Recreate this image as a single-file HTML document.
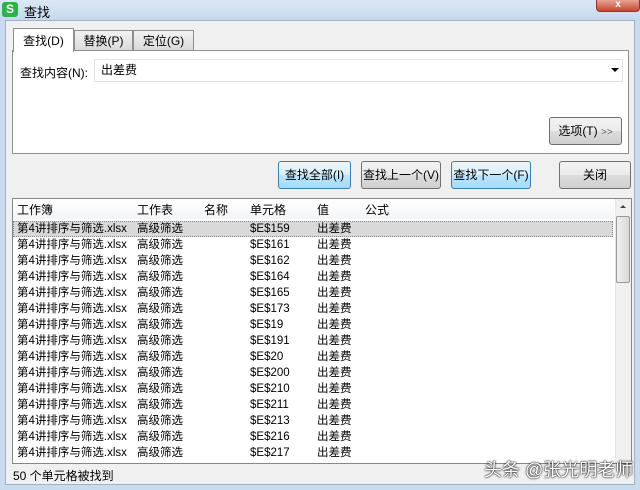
<!DOCTYPE html>
<html><head><meta charset="utf-8"><style>
*{margin:0;padding:0;box-sizing:border-box}
body{width:640px;height:490px;overflow:hidden;background:#c9dcef;font-family:"Liberation Sans","Noto Sans CJK SC",sans-serif;font-size:12px;color:#000;position:relative}
.a{position:absolute}
.title{left:0;top:0;width:640px;height:20px;background:linear-gradient(#dbe8f5,#c5d9ee)}
.frame{left:5px;top:20px;width:630px;height:465px;background:#f0f0f0;border:1px solid #9fb2c7}
.btn{position:absolute;border:1px solid #707070;border-radius:3px;background:linear-gradient(#f2f2f2,#ebebeb 50%,#dddddd 50%,#cfcfcf);text-align:center;line-height:26px;font-size:12px}
.btn.b{border-color:#3c7fb1;background:linear-gradient(#eaf6fd,#d9f0fc 50%,#bee6fd 50%,#a7d9f5)}
.row{position:absolute;left:13px;height:16px;line-height:17px;width:600px;font-size:11.5px}
.row span{position:absolute;top:0}
</style></head><body>
<div class="a title"></div>
<div class="a" style="left:2px;top:2px;width:16px;height:15px;background:#2fb04a;border-radius:3px;color:#fff;font-weight:bold;font-size:12px;text-align:center;line-height:15px">S</div>
<div class="a" style="left:24px;top:2px;font-size:13px">查找</div>
<div class="a" style="left:596px;top:0;width:44px;height:12px;background:linear-gradient(#e8a494,#c8472f);border:1px solid #8a3a2a;border-top:none;border-radius:0 0 4px 4px;color:#fff;font-size:10px;text-align:center;line-height:10px;font-weight:bold">x</div>
<div class="a frame"></div>
<div class="a" style="left:12px;top:50px;width:617px;height:104px;background:#fff;border:1px solid #8e8f8f"></div>
<div class="a" style="left:74px;top:30px;width:59px;height:21px;border:1px solid #8e8f8f;background:linear-gradient(#f2f2f2,#dadada);text-align:center;line-height:20px">替换(P)</div>
<div class="a" style="left:133px;top:30px;width:61px;height:21px;border:1px solid #8e8f8f;background:linear-gradient(#f2f2f2,#dadada);text-align:center;line-height:20px">定位(G)</div>
<div class="a" style="left:13px;top:28px;width:61px;height:24px;border:1px solid #8e8f8f;border-bottom:none;background:#fff;text-align:center;line-height:24px">查找(D)</div>
<div class="a" style="left:20px;top:64px">查找内容(N):</div>
<div class="a" style="left:94px;top:59px;width:529px;height:23px;border:1px solid #e3e3e3;background:#fff;padding-left:6px;line-height:21px">出差费</div>
<div class="a" style="left:611px;top:68px;width:0;height:0;border-left:4px solid transparent;border-right:4px solid transparent;border-top:4px solid #000"></div>
<div class="btn" style="left:549px;top:117px;width:73px;height:28px">选项(T) <span style="color:#666;font-size:10px">&gt;&gt;</span></div>
<div class="btn b" style="left:278px;top:161px;width:73px;height:28px">查找全部(I)</div>
<div class="btn" style="left:361px;top:161px;width:80px;height:28px">查找上一个(V)</div>
<div class="btn b" style="left:451px;top:161px;width:80px;height:28px">查找下一个(F)</div>
<div class="btn" style="left:559px;top:161px;width:72px;height:28px">关闭</div>
<div class="a" style="left:12px;top:198px;width:620px;height:266px;background:#fff;border:1px solid #828790"></div>
<div class="a" style="left:13px;top:199px;width:601px;height:20px;background:linear-gradient(#fff,#f4f5f7)"></div>
<div class="row" style="top:201px;height:18px;line-height:18px;font-size:12px"><span style="left:4px">工作簿</span><span style="left:124px">工作表</span><span style="left:191px">名称</span><span style="left:237px">单元格</span><span style="left:304px">值</span><span style="left:352px">公式</span></div>
<div class="a" style="left:13px;top:221px;width:600px;height:16px;background:#d9d9d9;border:1px dotted #888"></div>
<div id="rows"></div>
<div class="a" style="left:615px;top:199px;width:16px;height:264px;background:#f0f0f0;border-left:1px solid #e6e6e6"></div>
<div class="a" style="left:620px;top:205px;width:0;height:0;border-left:3px solid transparent;border-right:3px solid transparent;border-bottom:3px solid #444"></div>
<div class="a" style="left:616px;top:216px;width:14px;height:67px;border:1px solid #9a9a9a;border-radius:2px;background:linear-gradient(90deg,#f0f0f0,#d8d8d8)"></div>
<div class="a" style="left:13px;top:467px">50 个单元格被找到</div>
<div class="a" style="left:484px;top:456px;font-size:18px;color:#fff;text-shadow:0 0 2px #000,0 0 1px #000">头条 @张光明老师</div>
<script>
var v=[159,161,162,164,165,173,19,191,20,200,210,211,213,216,217],h='';
v.forEach(function(n,i){h+='<div class="row" style="top:'+(221+i*16)+'px"><span style="left:4px">第4讲排序与筛选.xlsx</span><span style="left:124px">高级筛选</span><span style="left:237px">$E$'+n+'</span><span style="left:304px">出差费</span></div>'});
document.getElementById('rows').innerHTML=h;
</script>
</body></html>
